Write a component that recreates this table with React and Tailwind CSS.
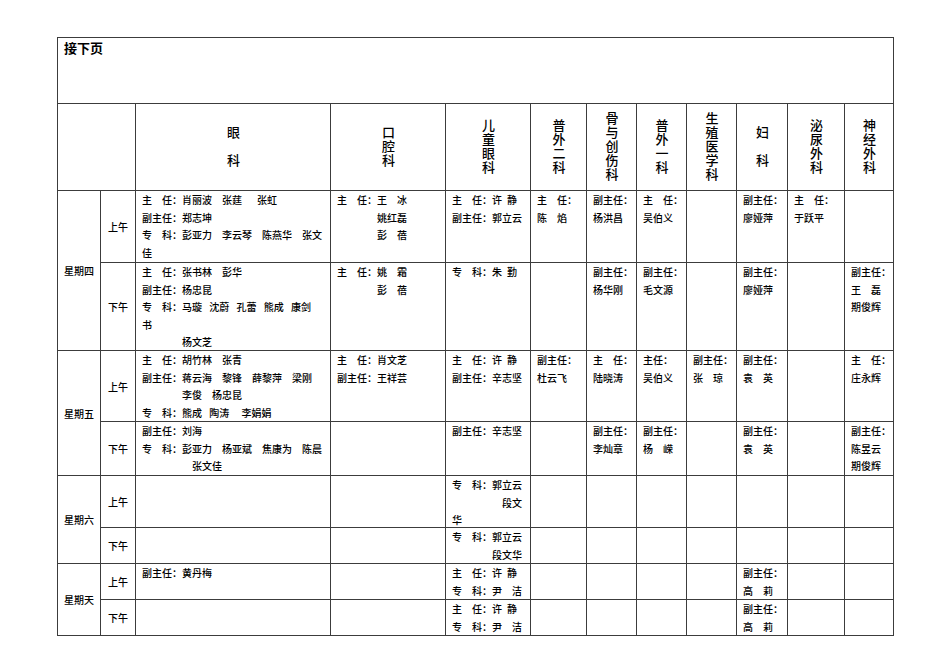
import React from "react";

const E = "\u3000";
const N = "\u2002";

const depts = ["眼\u3000科", "口腔科", "儿童眼科", "普外二科", "骨与创伤科", "普外一科", "生殖医学科", "妇\u3000科", "泌尿外科", "神经外科"];

const ZR = `主${E}任：`;
const FZR = "副主任：";
const ZK = `专${E}科：`;
const XJ = `${ZR}许${N}静`;

const rows = [
  {
    day: "星期四",
    am: [
      [`${ZR}肖丽波${E}张莛${E}${N}张虹`, `${FZR}郑志坤`, `${ZK}彭亚力${E}李云琴${E}陈燕华${E}张文`, "佳"],
      [`${ZR}王${E}冰`, `${E}${E}${E}${E}姚红磊`, `${E}${E}${E}${E}彭${E}蓓`],
      [XJ, `${FZR}郭立云`],
      [ZR, `陈${E}焰`],
      [FZR, "杨洪昌"],
      [ZR, "吴伯义"],
      [],
      [FZR, "廖娅萍"],
      [ZR, "于跃平"],
      [],
    ],
    pm: [
      [`${ZR}张书林${E}彭华`, `${FZR}杨忠昆`, `${ZK}马璇${N} 沈蔚${N} 孔蕾${N} 熊成${N} 康剑`, "书", `${E}${E}${E}${E}杨文芝`],
      [`${ZR}姚${E}霜`, `${E}${E}${E}${E}彭${E}蓓`],
      [`${ZK}朱${N}勤`],
      [],
      [FZR, "杨华刚"],
      [FZR, "毛文源"],
      [],
      [FZR, "廖娅萍"],
      [],
      [FZR, `王${E}磊`, "期俊辉"],
    ],
  },
  {
    day: "星期五",
    am: [
      [`${ZR}胡竹林${E}张青`, `${FZR}蒋云海${E}黎锋${E}薛黎萍${E}梁刚`, `${E}${E}${E}${E}李俊${E}杨忠昆`, `${ZK}熊成${N} 陶涛${E} 李娟娟`],
      [`${ZR}肖文芝`, `${FZR}王祥芸`],
      [XJ, `${FZR}辛志坚`],
      [FZR, "杜云飞"],
      [ZR, "陆晓涛"],
      ["主任：", "吴伯义"],
      [FZR, `张${E}琼`],
      [FZR, `袁${E}英`],
      [],
      [ZR, "庄永辉"],
    ],
    pm: [
      [`${FZR}刘海`, `${ZK}彭亚力${E}杨亚斌${E}焦康为${E}陈晨`, `${E}${E}${E}${E}${E}张文佳`],
      [],
      [`${FZR}辛志坚`],
      [],
      [FZR, "李灿章"],
      [FZR, `杨${E}嵘`],
      [],
      [FZR, `袁${E}英`],
      [],
      [FZR, "陈昱云", "期俊辉"],
    ],
  },
  {
    day: "星期六",
    am: [[], [], [`${ZK}郭立云`, `${E}${E}${E}${E}${E}段文`, "华"], [], [], [], [], [], [], []],
    pm: [[], [], [`${ZK}郭立云`, `${E}${E}${E}${E}段文华`], [], [], [], [], [], [], []],
  },
  {
    day: "星期天",
    am: [[`${FZR}黄丹梅`], [], [XJ, `${ZK}尹${E}洁`], [], [], [], [], [FZR, `高${E}莉`], [], []],
    pm: [[], [], [XJ, `${ZK}尹${E}洁`], [], [], [], [], [FZR, `高${E}莉`], [], []],
  },
];

const cell = "border-r border-b border-[#3c3c3c]";

function Body({ lines }) {
  return (
    <div className={`${cell} pl-[6px] text-[10px] leading-[17.6px] overflow-hidden`}>
      {lines.map((l, i) => (
        <div key={i} className="whitespace-pre">
          {l}
        </div>
      ))}
    </div>
  );
}

export default function App() {
  return (
    <div className="min-h-[672px] w-[950px] bg-white pt-[37px] pl-[57px] font-['Noto_Sans_CJK_SC','Noto_Sans_CJK_JP',sans-serif] font-medium text-black">
      <div className="grid w-fit grid-cols-[43px_35px_195px_115px_85px_56px_50px_50px_50px_51px_57px_49px] grid-rows-[66px_87px_72px_88px_71px_54px_52px_36px_36px_36px] border-l border-t border-[#3c3c3c]">
        <div className={`${cell} col-span-12 pl-[6px] pt-[3px] text-[13px] font-bold leading-[14px]`}>接下页</div>
        <div className={`${cell} col-span-2`} />
        {depts.map((d, i) => (
          <div key={i} className={`${cell} flex items-center justify-center`}>
            <div className="text-[13px] leading-[16px] tracking-[1px] [writing-mode:vertical-rl] whitespace-pre">{d}</div>
          </div>
        ))}
        {rows.map((r) => (
          <React.Fragment key={r.day}>
            <div className={`${cell} row-span-2 flex items-center justify-center text-[10px]`}>{r.day}</div>
            <div className={`${cell} flex items-center justify-center text-[10px]`}>上午</div>
            {r.am.map((lines, i) => (
              <Body key={"a" + i} lines={lines} />
            ))}
            <div className={`${cell} flex items-center justify-center text-[10px]`}>下午</div>
            {r.pm.map((lines, i) => (
              <Body key={"p" + i} lines={lines} />
            ))}
          </React.Fragment>
        ))}
      </div>
    </div>
  );
}
